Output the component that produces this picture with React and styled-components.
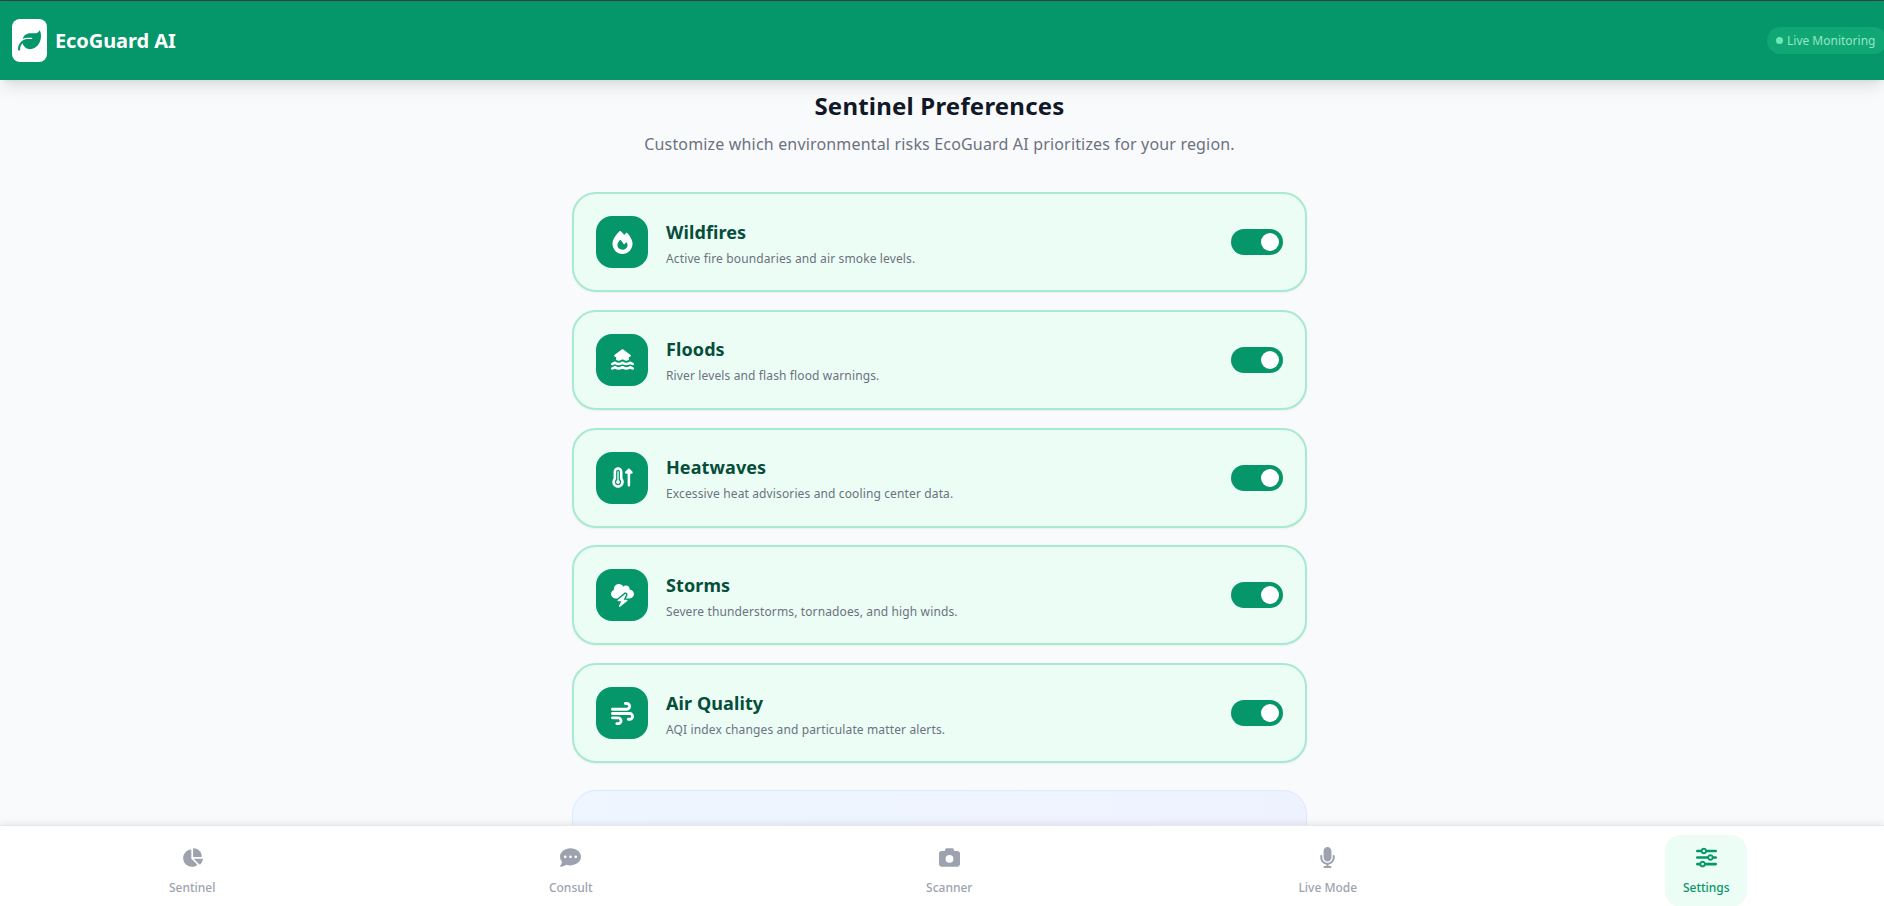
import React from "react";
import styled, { createGlobalStyle } from "styled-components";
import { FaLeaf, FaWind, FaChartPie, FaCommentDots, FaCamera, FaMicrophone, FaSliders, FaFire, FaHouseFloodWater, FaTemperatureArrowUp, FaCloudBolt } from "react-icons/fa6";

const GlobalStyle = createGlobalStyle`
  html, body {
    margin: 0;
    height: 100%;
    overflow: hidden;
    background: #f9fafb;
    font-family: "Noto Sans", "Open Sans", sans-serif;
  }
  * { box-sizing: border-box; }
`;

const Page = styled.div`
  height: 100vh;
  display: flex;
  flex-direction: column;
  border-top: 1px solid #3a3f3d;
`;

const Header = styled.header`
  flex: none;
  height: 79px;
  padding-left: 12px;
  background: #059669;
  display: flex;
  align-items: center;
  justify-content: space-between;
  box-shadow: 0 10px 15px -3px rgba(0, 0, 0, 0.1), 0 4px 6px -4px rgba(0, 0, 0, 0.1);
  position: relative;
  z-index: 2;
`;

const Brand = styled.div`
  display: flex;
  align-items: center;
  gap: 8px;
`;

const LogoBox = styled.div`
  width: 35px;
  height: 43px;
  border-radius: 8px;
  background: #fff;
  color: #059669;
  display: flex;
  align-items: center;
  justify-content: center;
  font-size: 23px;
`;

const BrandName = styled.span`
  color: #fff;
  font-size: 20px;
  font-weight: 700;
  letter-spacing: -0.08px;
`;

const LivePill = styled.div`
  flex: none;
  height: 27px;
  width: 120px;
  margin-right: -3px;
  padding-left: 9px;
  border-radius: 14px;
  background: #10a775;
  color: #93e6c4;
  font-size: 12px;
  display: flex;
  align-items: center;
  gap: 4px;
  white-space: nowrap;
`;

const LiveDot = styled.i`
  width: 7px;
  height: 7px;
  border-radius: 50%;
  background: #6ee7b7;
`;

const Main = styled.main`
  flex: 1;
  min-height: 0;
  overflow: hidden;
  padding: 10px 5px 0 0;
  display: flex;
  flex-direction: column;
  align-items: center;
`;

const Title = styled.h1`
  margin: 0;
  font-size: 24px;
  line-height: 32px;
  font-weight: 700;
  letter-spacing: 0.2px;
  color: #111827;
`;

const Subtitle = styled.p`
  margin: 10px 0 0;
  font-size: 16px;
  line-height: 24px;
  letter-spacing: 0.17px;
  color: #6b7280;
`;

const CardList = styled.section`
  width: 735px;
  margin-top: 36px;
  display: flex;
  flex-direction: column;
  gap: 17.75px;
`;

const Card = styled.article`
  flex: none;
  height: 100px;
  padding: 0 22px;
  border: 2px solid #a7e9d1;
  border-radius: 24px;
  background: #ecfdf5;
  display: flex;
  align-items: center;
  box-shadow: 0 1px 2px rgba(0, 0, 0, 0.05);
`;

const IconBox = styled.div`
  flex: none;
  width: 52px;
  height: 52px;
  border-radius: 16px;
  background: #059669;
  color: #fff;
  font-size: 23px;
  display: flex;
  align-items: center;
  justify-content: center;
`;

const CardText = styled.div`
  flex: 1;
  margin-left: 18px;
`;

const CardTitle = styled.h3`
  margin: 0;
  font-size: 18px;
  line-height: 28px;
  font-weight: 700;
  letter-spacing: 0.1px;
  color: #064e3b;
`;

const CardDesc = styled.p`
  margin: 5px 0 0;
  font-size: 12px;
  line-height: 16px;
  letter-spacing: 0.13px;
  color: #6b7280;
`;

const Toggle = styled.div`
  flex: none;
  width: 52px;
  height: 26px;
  padding-right: 4px;
  border-radius: 13px;
  background: #059669;
  display: flex;
  align-items: center;
  justify-content: flex-end;
`;

const Knob = styled.span`
  width: 18px;
  height: 18px;
  border-radius: 50%;
  background: #fff;
`;

const InfoCard = styled.div`
  flex: none;
  width: 735px;
  height: 120px;
  margin-top: 27px;
  border: 1px solid #dbeafe;
  border-radius: 24px;
  background: linear-gradient(to right, #eff6ff, #eef2ff);
`;

const Nav = styled.nav`
  flex: none;
  height: 81px;
  padding: 9px 0 0 3px;
  background: #fff;
  border-top: 1px solid #e5e7eb;
  display: grid;
  grid-template-columns: repeat(5, 378.5px);
  box-shadow: 0 -4px 6px -1px rgba(0, 0, 0, 0.06);
  position: relative;
  z-index: 2;
`;

const NavItem = styled.a`
  justify-self: center;
  width: 82px;
  height: 72px;
  border-radius: 16px;
  padding-top: 12px;
  background: ${(p) => (p.$active ? "#ecfdf5" : "transparent")};
  color: ${(p) => (p.$active ? "#059669" : "#9ca3af")};
  font-size: 21px;
  display: flex;
  flex-direction: column;
  align-items: center;
  gap: 12px;
`;

const NavLabel = styled.span`
  font-size: 12px;
  line-height: 16px;
  font-weight: 500;
  white-space: nowrap;
`;

const risks = [
  { icon: <FaFire />, title: "Wildfires", desc: "Active fire boundaries and air smoke levels." },
  { icon: <FaHouseFloodWater />, title: "Floods", desc: "River levels and flash flood warnings." },
  { icon: <FaTemperatureArrowUp />, title: "Heatwaves", desc: "Excessive heat advisories and cooling center data." },
  { icon: <FaCloudBolt />, title: "Storms", desc: "Severe thunderstorms, tornadoes, and high winds." },
  { icon: <FaWind />, title: "Air Quality", desc: "AQI index changes and particulate matter alerts." },
];

const tabs = [
  { icon: <FaChartPie />, label: "Sentinel" },
  { icon: <FaCommentDots />, label: "Consult" },
  { icon: <FaCamera />, label: "Scanner" },
  { icon: <FaMicrophone />, label: "Live Mode" },
  { icon: <FaSliders />, label: "Settings", active: true },
];

export default function App() {
  return (
    <Page>
      <GlobalStyle />
      <Header>
        <Brand>
          <LogoBox>
            <FaLeaf />
          </LogoBox>
          <BrandName>EcoGuard AI</BrandName>
        </Brand>
        <LivePill>
          <LiveDot />
          Live Monitoring
        </LivePill>
      </Header>
      <Main>
        <Title>Sentinel Preferences</Title>
        <Subtitle>Customize which environmental risks EcoGuard AI prioritizes for your region.</Subtitle>
        <CardList>
          {risks.map((r) => (
            <Card key={r.title}>
              <IconBox>{r.icon}</IconBox>
              <CardText>
                <CardTitle>{r.title}</CardTitle>
                <CardDesc>{r.desc}</CardDesc>
              </CardText>
              <Toggle>
                <Knob />
              </Toggle>
            </Card>
          ))}
        </CardList>
        <InfoCard />
      </Main>
      <Nav>
        {tabs.map((t) => (
          <NavItem key={t.label} $active={t.active}>
            {t.icon}
            <NavLabel>{t.label}</NavLabel>
          </NavItem>
        ))}
      </Nav>
    </Page>
  );
}
